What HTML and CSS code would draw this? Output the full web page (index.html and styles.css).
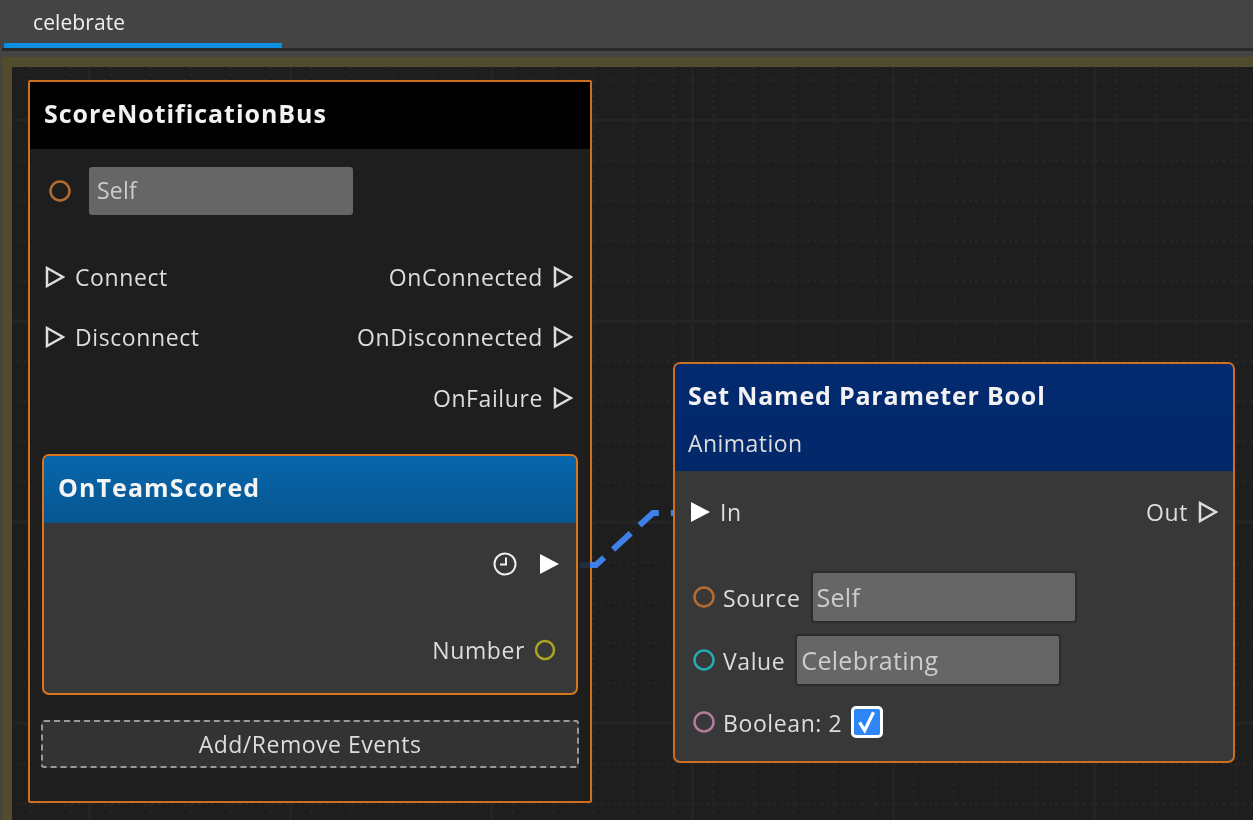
FILE: index.html
```html
<!DOCTYPE html>
<html>
<head>
<meta charset="utf-8">
<title>celebrate</title>
<link rel="stylesheet" href="styles.css">
</head>
<body>
<div class="tabbar">
  <div class="tab">celebrate</div>
</div>
<div class="strip"></div>
<div class="frame">
  <div class="canvas">
    <svg class="grid" width="1241" height="753">
      <defs>
        <pattern id="minor" x="-2" y="-7" width="40.2" height="40.2" patternUnits="userSpaceOnUse">
          <path d="M20 0V40.2M0 20H40.2" stroke="#292929" stroke-width="2" stroke-dasharray="2 5"/>
        </pattern>
        <pattern id="major" x="-23" y="-47.5" width="201" height="201" patternUnits="userSpaceOnUse">
          <path d="M100.5 0V201M0 100.5H201" stroke="#262626" stroke-width="2" fill="none"/>
        </pattern>
      </defs>
      <rect width="1241" height="753" fill="url(#minor)"/>
      <rect width="1241" height="753" fill="url(#major)"/>
    </svg>

    <div class="node bus">
      <div class="bus-head">ScoreNotificationBus</div>
      <div class="bus-body">
        <div class="row source-row">
          <svg class="pin" width="24" height="24"><circle cx="12" cy="12" r="9.5" class="c-orange"/></svg>
          <div class="field wide">Self</div>
        </div>
        <div class="slots">
          <div class="row slot">
            <svg class="tri" width="20" height="22"><path d="M2 2L18 11L2 20Z" class="open"/></svg>
            <span>Connect</span>
            <span class="push">OnConnected</span>
            <svg class="tri" width="20" height="22"><path d="M2 2L18 11L2 20Z" class="open"/></svg>
          </div>
          <div class="row slot">
            <svg class="tri" width="20" height="22"><path d="M2 2L18 11L2 20Z" class="open"/></svg>
            <span>Disconnect</span>
            <span class="push">OnDisconnected</span>
            <svg class="tri" width="20" height="22"><path d="M2 2L18 11L2 20Z" class="open"/></svg>
          </div>
          <div class="row slot last">
            <span class="push">OnFailure</span>
            <svg class="tri" width="20" height="22"><path d="M2 2L18 11L2 20Z" class="open"/></svg>
          </div>
        </div>

        <div class="event">
          <div class="event-head">OnTeamScored</div>
          <div class="event-body">
            <div class="row event-out">
              <svg class="clock" width="26" height="26" viewBox="0 0 26 26"><circle cx="13" cy="13" r="10.5"/><path d="M14 6.5V13.5H8"/></svg>
              <svg class="tri" width="20" height="22"><path d="M1 1L20 11L1 21Z" class="solid"/></svg>
            </div>
            <div class="row event-num">
              <span>Number</span>
              <svg class="pin" width="24" height="24"><circle cx="12" cy="12" r="9" class="c-yellow"/></svg>
            </div>
          </div>
        </div>

        <div class="addbtn">Add/Remove Events</div>
      </div>
    </div>

    <svg class="wire" width="1241" height="753">
      <path d="M568 498H578" stroke="#222c3a" stroke-width="6" fill="none"/>
      <path d="M578 498H584L641 446H662" stroke="#3f7fe8" stroke-width="6" fill="none" stroke-dasharray="24 12" stroke-dashoffset="7"/>
    </svg>

    <div class="node action">
      <div class="action-head">
        <div class="action-title">Set Named Parameter Bool</div>
        <div class="action-sub">Animation</div>
      </div>
      <div class="action-body">
        <div class="row inout">
          <svg class="tri" width="20" height="22"><path d="M1 1L20 11L1 21Z" class="solid"/></svg>
          <span>In</span>
          <span class="push">Out</span>
          <svg class="tri" width="20" height="22"><path d="M2 2L18 11L2 20Z" class="open"/></svg>
        </div>
        <div class="row param first">
          <svg class="pin" width="24" height="24"><circle cx="12" cy="12" r="9.5" class="c-orange"/></svg>
          <span>Source</span>
          <div class="field boxed">Self</div>
        </div>
        <div class="row param second">
          <svg class="pin" width="24" height="24"><circle cx="12" cy="12" r="9.5" class="c-teal"/></svg>
          <span>Value</span>
          <div class="field boxed">Celebrating</div>
        </div>
        <div class="row param">
          <svg class="pin" width="24" height="24"><circle cx="12" cy="12" r="9.5" class="c-pink"/></svg>
          <span>Boolean: 2</span>
          <div class="check">
            <svg width="28" height="28" viewBox="0 0 28 28"><path d="M6 14.5L11.5 23L21 3.5" fill="none" stroke="#fff" stroke-width="3.5"/></svg>
          </div>
        </div>
      </div>
    </div>
  </div>
</div>
</body>
</html>
```
FILE: styles.css
```css
html, body { margin: 0; padding: 0; height: 100%; overflow: hidden; }
body { background: #444; color: #ddd; font-family: "Open Sans", "DejaVu Sans", sans-serif; font-size: 23px; letter-spacing: 0.6px; display: flex; flex-direction: column; }

.tabbar { height: 48px; background: #444; border-bottom: 3px solid #2a2a2a; margin-left: 2px; flex: none; }
.tab { width: 278px; height: 48px; margin-left: 2px; box-sizing: border-box; padding: 7px 0 0 29px; border-bottom: 5px solid #0d8ee0; color: #f0f0f0; font-size: 21px; letter-spacing: 0.1px; line-height: 30px; filter: blur(0.3px); }
.strip { height: 6px; background: #444; flex: none; }

.frame { flex: 1; margin-left: 2px; border-left: 10px solid #514d2c; border-top: 10px solid #514d2c; min-height: 0; }
.canvas { position: relative; height: 100%; background: #1e1e1e; overflow: hidden; }
.grid, .wire { position: absolute; left: 0; top: 0; }

.row { display: flex; align-items: center; }
.push { margin-left: auto; }
.tri .open { fill: none; stroke: #ddd; stroke-width: 2.5; }
.tri .solid { fill: #fff; }
.pin circle { fill: none; stroke-width: 2.5; }
.c-orange { stroke: #b46c30; }
.c-yellow { stroke: #aaa620; }
.c-teal { stroke: #24aab0; }
.c-pink { stroke: #b47c9c; }
.clock { fill: none; stroke: #eee; stroke-width: 2; }

.node { position: absolute; box-sizing: border-box; border: 2px solid #cc6f1e; filter: blur(0.3px); }
.field { background: #666; color: #ccc; border-radius: 3px; box-sizing: border-box; }

/* bus node */
.bus { left: 16px; top: 13px; width: 564px; height: 723px; background: #1e1e1e; border-radius: 2px; }
.bus-head { height: 67px; background: #000; color: #f2f2f2; font-weight: 700; font-size: 25px; letter-spacing: 0.95px; line-height: 62px; padding-left: 14px; }
.bus-body { padding: 0 11px; }
.source-row { height: 48px; margin-top: 18px; padding-left: 7px; }
.field.wide { width: 264px; height: 48px; margin-left: 17px; padding-left: 8px; line-height: 47px; letter-spacing: 0.2px; }
.slots { margin-top: 32px; padding: 0 6px 0 4px; }
.slot { height: 60px; gap: 10px; }
.slot.last { margin-top: 1px; }

.event { box-sizing: border-box; margin-top: 26px; margin-left: 1px; width: 536px; height: 241px; border: 2px solid #d9761c; border-radius: 7px; background: #383838; overflow: hidden; }
.event-head { height: 67px; background: linear-gradient(#0867ac, #05558f); color: #f4f4f4; font-weight: 700; font-size: 25px; letter-spacing: 1.08px; line-height: 63px; padding-left: 14px; }
.event-out { margin-top: 28px; height: 26px; justify-content: flex-end; gap: 21px; padding-right: 17px; }
.event-num { margin-top: 60px; height: 26px; justify-content: flex-end; gap: 8px; padding-right: 19px; }

.addbtn { box-sizing: border-box; margin-top: 25px; width: 538px; height: 48px; border: 2px dashed #9a9a9a; border-radius: 3px; background: #333; text-align: center; line-height: 44px; letter-spacing: 0.5px; }

/* action node */
.action { left: 661px; top: 295px; width: 562px; height: 401px; background: #383838; border-radius: 7px; overflow: hidden; }
.action-head { height: 107px; background: linear-gradient(#032a70, #03286a); padding-left: 13px; }
.action-title { color: #f2f2f2; font-weight: 700; font-size: 25px; letter-spacing: 0.8px; line-height: 30px; padding-top: 16px; }
.action-sub { line-height: 30px; padding-top: 18px; color: #ddd; letter-spacing: 0.45px; }
.action-body { padding: 0 15px; }
.inout { height: 26px; margin-top: 28px; gap: 10px; }
.param { height: 52px; margin-left: 2px; margin-top: 10px; gap: 7px; }
.param span { padding-top: 1px; }
.param.first { margin-top: 46px; }
.param.second { margin-top: 11px; }
.field.boxed { width: 266px; height: 52px; margin-left: 3px; border: 2px solid #2c2c2c; border-radius: 4px; padding-left: 4px; font-size: 25px; line-height: 48px; letter-spacing: 0.3px; }
.check { box-sizing: border-box; width: 32px; height: 32px; margin-left: 2px; background: #2e86f6; border: 3px solid #fff; border-radius: 5px; display: flex; align-items: center; justify-content: center; }
```
